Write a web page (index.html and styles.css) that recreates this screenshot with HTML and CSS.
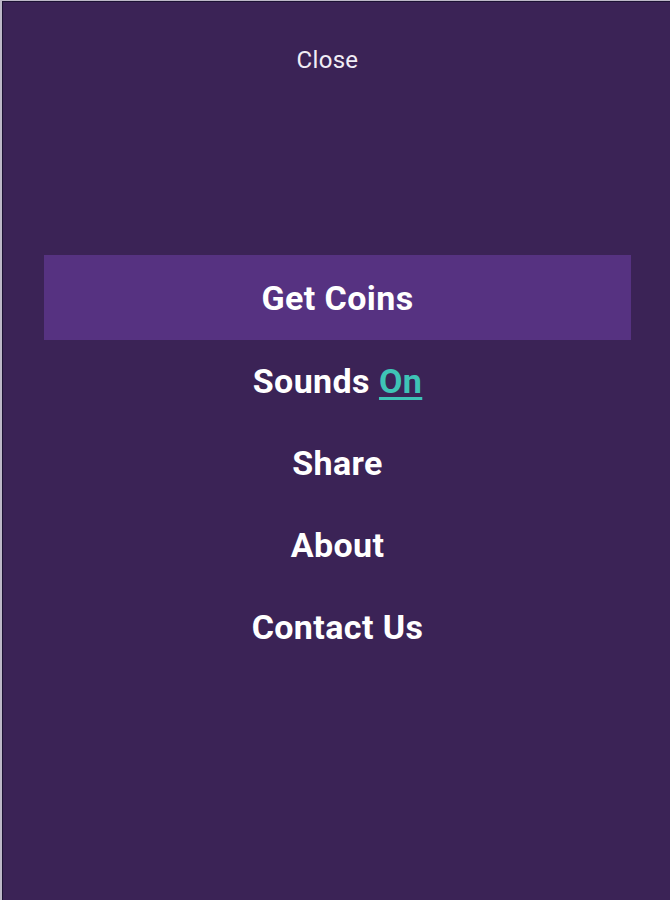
FILE: index.html
```html
<!DOCTYPE html>
<html>
<head>
<meta charset="utf-8">
<link rel="stylesheet" href="styles.css">
</head>
<body>
<div class="frame">
  <div class="close">Close</div>
  <nav class="menu">
    <div class="item active">Get Coins</div>
    <div class="item">Sounds <span class="on">On</span></div>
    <div class="item">Share</div>
    <div class="item">About</div>
    <div class="item">Contact Us</div>
  </nav>
</div>
</body>
</html>
```

FILE: styles.css
```css
html, body {
  margin: 0;
  padding: 0;
  height: 100%;
  background: #bdb8c8;
}
body {
  font-family: Roboto, "Noto Sans", sans-serif;
  color: #ffffff;
}
.frame {
  box-sizing: border-box;
  margin-left: 2px;
  margin-top: 1px;
  height: 899px;
  background: #3b2356;
  border-left: 1px solid #1c1233;
  border-top: 1px solid #1c1233;
  padding-top: 43px;
}
.close {
  width: 649px;
  text-align: center;
  font-size: 24px;
  line-height: 30px;
  color: #f1edf5;
  letter-spacing: 0.3px;
}
.menu {
  margin-top: 180px;
  margin-left: 41px;
  width: 587px;
  display: flex;
  flex-direction: column;
}
.item {
  height: 82px;
  display: flex;
  align-items: center;
  justify-content: center;
  font-size: 34px;
  font-weight: 700;
  letter-spacing: 0.4px;
}
.item.active {
  height: 85px;
  background: #563281;
}
.on {
  color: #3ec3b6;
  text-decoration: underline;
  text-decoration-thickness: 3px;
  text-underline-offset: 4px;
  margin-left: 9px;
}
```
